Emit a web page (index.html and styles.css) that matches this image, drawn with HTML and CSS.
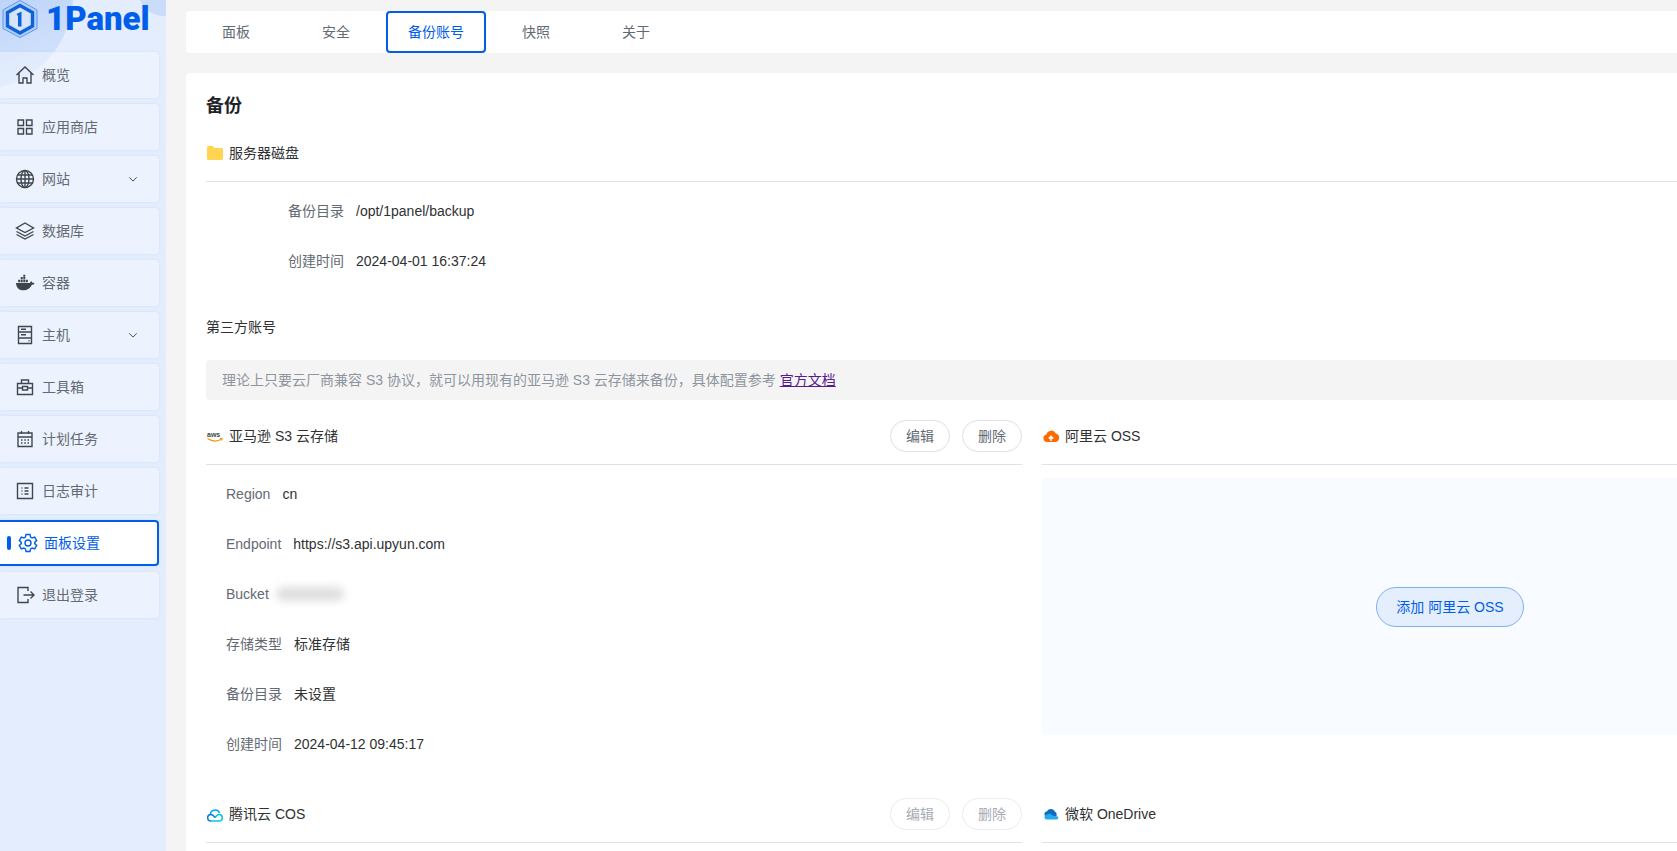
FILE: index.html
```html
<!DOCTYPE html>
<html lang="zh-CN">
<head>
    <meta charset="UTF-8">
    <title>1Panel 面板设置</title>
    <link rel="stylesheet" href="styles.css">
</head>
<body>
    <div class="layout">
        <aside class="sidebar">
            <span class="blob blob-big"></span>
            <span class="blob blob-small"></span>
            <div class="logo">
                <svg class="logo-mark" viewBox="0 0 36 38" fill="none">
                    <path d="M18 .5 35 10v18.500L18 37.500 1 28.500V10z" fill="#b4cffa" stroke="#5b96f0" stroke-width="1"/>
                    <path d="M18 5.500 30.500 12.500v13.500L18 33 5.500 26V12.500z" fill="#d6e4fc" stroke="#0f62d8" stroke-width="3.400"/>
                    <path d="M14.500 14 19.500 11.500V26.500H16V16z" fill="#0f62d8"/>
                </svg>
                <span class="logo-text">1Panel</span>
            </div>
            <nav class="menu">
                <a class="menu-item">
                    <svg class="menu-icon" viewBox="0 0 20 20"><path d="M1.500 10 10 2l8.500 8M4 8v10h4v-5h4v5h4V8"/></svg>
                    <span>概览</span>
                </a>
                <a class="menu-item">
                    <svg class="menu-icon" viewBox="0 0 20 20"><path d="M3 3h5.500v5.500H3zM11.500 3H17v5.500h-5.500zM3 11.500h5.500V17H3zM11.500 11.500H17V17h-5.500z"/></svg>
                    <span>应用商店</span>
                </a>
                <a class="menu-item">
                    <svg class="menu-icon" viewBox="0 0 20 20"><circle cx="10" cy="10" r="8.500"/><ellipse cx="10" cy="10" rx="4" ry="8.500"/><path d="M10 1.500v17M1.500 10h17M2.700 6h14.600M2.700 14h14.600"/></svg>
                    <span>网站</span>
                    <svg class="menu-arrow" viewBox="0 0 12 12"><path d="M1.500 4 6 8.500 10.500 4"/></svg>
                </a>
                <a class="menu-item">
                    <svg class="menu-icon" viewBox="0 0 20 20"><path d="M10 2 18.500 7 10 11.500 1.500 7zM1.500 10.500 10 15l8.500-4.500M1.500 13.500 10 18l8.500-4.500"/></svg>
                    <span>数据库</span>
                </a>
                <a class="menu-item">
                    <svg class="menu-icon docker" viewBox="0 0 22 18"><path d="M1 9h15.500c.3-1.500 1-2 1.500-2 .6.400 1 1 1.100 1.700 1 0 1.900.1 2.400.5-.6 1.200-1.700 1.600-3 1.600C17 14.500 13.500 17 9 17c-5 0-7.500-3-8-8z"/><path d="M3.500 5.500h2.200v2.800H3.500zM6.300 5.500h2.200v2.800H6.300zM9.100 5.500h2.200v2.800H9.100zM11.900 5.500h2.200v2.800h-2.200zM6.300 2.500h2.200v2.500H6.300zM9.100 2.500h2.200v2.500H9.100zM9.100 0h2.200v2H9.100z"/></svg>
                    <span>容器</span>
                </a>
                <a class="menu-item">
                    <svg class="menu-icon" viewBox="0 0 20 20"><path d="M3.500 1.500h13v17h-13zM3.500 7h13M3.500 13h13M6 4.200h5M6 9.800h5M13.500 15.800h1"/></svg>
                    <span>主机</span>
                    <svg class="menu-arrow" viewBox="0 0 12 12"><path d="M1.500 4 6 8.500 10.500 4"/></svg>
                </a>
                <a class="menu-item">
                    <svg class="menu-icon" viewBox="0 0 20 20"><path d="M2.500 6.500h15v11h-15zM6.500 6.500V3h7v3.500M2.500 11h5M12.500 11h5M7.500 9.500h5v3.500h-5z"/></svg>
                    <span>工具箱</span>
                </a>
                <a class="menu-item">
                    <svg class="menu-icon" viewBox="0 0 20 20"><path d="M3 4h14v13.500H3zM3 8h14M6.500 2v3M13.500 2v3M6 11h1.500M9.300 11h1.500M12.500 11H14M6 14h1.500M9.300 14h1.500M12.500 14H14"/></svg>
                    <span>计划任务</span>
                </a>
                <a class="menu-item">
                    <svg class="menu-icon" viewBox="0 0 20 20"><path d="M2.500 2.500h15v15h-15zM6.500 7h1M9.500 7h4M6.500 10h1M9.500 10h4M6.500 13h1M9.500 13h4"/></svg>
                    <span>日志审计</span>
                </a>
                <a class="menu-item active">
                    <span class="active-bar"></span>
                    <svg class="menu-icon" viewBox="0 0 20 20"><path d="M8 1.500h4l.6 2.600 1.500.9 2.600-.8 2 3.400-2 1.800v1.200l2 1.800-2 3.400-2.600-.8-1.500.9-.6 2.600H8l-.6-2.600-1.500-.9-2.600.8-2-3.400 2-1.800V9.400l-2-1.800 2-3.400 2.600.8 1.500-.9z"/><circle cx="10" cy="10" r="3"/></svg>
                    <span>面板设置</span>
                </a>
                <a class="menu-item">
                    <svg class="menu-icon" viewBox="0 0 20 20"><path d="M13 6V2.500H3v15h10V14M8.500 10H19M15.500 6.500 19 10l-3.500 3.500"/></svg>
                    <span>退出登录</span>
                </a>
            </nav>
        </aside>

        <main class="main">
            <div class="tabs">
                <a class="tab">面板</a>
                <a class="tab">安全</a>
                <a class="tab active">备份账号</a>
                <a class="tab">快照</a>
                <a class="tab">关于</a>
            </div>

            <section class="card">
                <h2 class="card-title">备份</h2>
                <div class="section-head">
                    <div class="head-title">
                        <svg class="brand-icon" viewBox="0 0 16 14"><path d="M1.500 0h4.300l1.500 2h7.200A1.500 1.500 0 0 1 16 3.500v9a1.500 1.500 0 0 1-1.500 1.500h-13A1.500 1.500 0 0 1 0 12.500v-11A1.500 1.500 0 0 1 1.500 0z" fill="#ffd552"/></svg>
                        <span>服务器磁盘</span>
                    </div>
                </div>
                <div class="info-list">
                    <div class="info-row wide"><label>备份目录</label><span>/opt/1panel/backup</span></div>
                    <div class="info-row wide"><label>创建时间</label><span>2024-04-01 16:37:24</span></div>
                </div>

                <div class="third-title">第三方账号</div>
                <div class="alert">理论上只要云厂商兼容 S3 协议，就可以用现有的亚马逊 S3 云存储来备份，具体配置参考 <a class="doc-link">官方文档</a></div>

                <div class="accounts">
                    <div class="account">
                        <div class="section-head">
                            <div class="head-title">
                                <svg class="brand-icon" viewBox="0 0 16 14" fill="none">
                                    <text x="0" y="7.500" class="aws-text">aws</text>
                                    <path d="M.5 9.500c4.500 3 10 3 14 .5M13 9.300l2 .4-.8 1.800" stroke="#f79400" stroke-width="1.200"/>
                                </svg>
                                <span>亚马逊 S3 云存储</span>
                            </div>
                            <div class="head-actions">
                                <button class="pill">编辑</button>
                                <button class="pill">删除</button>
                            </div>
                        </div>
                        <div class="info-list">
                            <div class="info-row"><label>Region</label><span>cn</span></div>
                            <div class="info-row"><label>Endpoint</label><span>https://s3.api.upyun.com</span></div>
                            <div class="info-row"><label>Bucket</label><span class="blurred"></span></div>
                            <div class="info-row"><label>存储类型</label><span>标准存储</span></div>
                            <div class="info-row"><label>备份目录</label><span>未设置</span></div>
                            <div class="info-row"><label>创建时间</label><span>2024-04-12 09:45:17</span></div>
                        </div>
                    </div>

                    <div class="account">
                        <div class="section-head">
                            <div class="head-title">
                                <svg class="brand-icon" viewBox="0 0 16 14">
                                    <path d="M4 13a3.800 3.800 0 0 1-.6-7.500A5 5 0 0 1 12.800 4.500 4.300 4.300 0 0 1 12 13z" fill="#ff6a00"/>
                                    <path d="M8 12V7.500M5.800 9.500 8 7.300l2.200 2.200" stroke="#fff" stroke-width="1.500" fill="none"/>
                                </svg>
                                <span>阿里云 OSS</span>
                            </div>
                        </div>
                        <div class="empty-box">
                            <button class="add-btn">添加 阿里云 OSS</button>
                        </div>
                    </div>

                    <div class="account">
                        <div class="section-head">
                            <div class="head-title">
                                <svg class="brand-icon tall" viewBox="0 0 16 16" fill="none">
                                    <path d="M3.300 9A4.800 4.800 0 0 1 12.500 7" stroke="#00a3ff" stroke-width="1.500"/>
                                    <path d="M4 15h8a3.300 3.300 0 0 0 0-6.600c-2 0-3 1.600-4 3.300" stroke="#00c8dc" stroke-width="1.500"/>
                                    <path d="M8 11.700C7 10 6 8.400 4 8.400A3.300 3.300 0 0 0 4 15" stroke="#0078e6" stroke-width="1.500"/>
                                </svg>
                                <span>腾讯云 COS</span>
                            </div>
                            <div class="head-actions">
                                <button class="pill disabled">编辑</button>
                                <button class="pill disabled">删除</button>
                            </div>
                        </div>
                    </div>

                    <div class="account">
                        <div class="section-head">
                            <div class="head-title">
                                <svg class="brand-icon" viewBox="0 0 16 14">
                                    <path d="M2.500 9.500A3 3 0 0 1 4 4.200 4.500 4.500 0 0 1 12 4.800 3 3 0 0 1 13 9.500z" fill="#0f6cbd"/>
                                    <path d="M3 12.500a2.500 2.500 0 0 1-.5-4.300L6.500 6.500 11 9l4 .6a2.200 2.200 0 0 1-1.500 2.900z" fill="#29a8ea"/>
                                </svg>
                                <span>微软 OneDrive</span>
                            </div>
                        </div>
                    </div>
                </div>
            </section>
        </main>
    </div>
</body>
</html>
```

FILE: styles.css
```css
* {
    margin: 0;
    padding: 0;
    box-sizing: border-box;
}

html,
body {
    height: 100%;
    overflow: hidden;
}

body {
    font-family: "Liberation Sans", "Noto Sans CJK SC", sans-serif;
    font-size: 14px;
    line-height: 20px;
    color: #303133;
    background: #f4f4f5;
}

.layout {
    display: flex;
    height: 851px;
}

/* sidebar */
.sidebar {
    position: relative;
    flex: none;
    width: 166px;
    overflow: hidden;
    background: #e3edfd;
}

.blob {
    position: absolute;
    border-radius: 50%;
}

.blob-big {
    left: -117px;
    top: -100px;
    width: 190px;
    height: 190px;
    background: linear-gradient(160deg, #b3cef8 40%, #dce8fc 100%);
}

.blob-small {
    right: -24px;
    top: -36px;
    width: 52px;
    height: 52px;
    background: #c9dcfa;
}

.logo {
    position: relative;
    display: flex;
    align-items: center;
    gap: 8px;
    height: 38px;
    padding-left: 2px;
    margin-bottom: 14px;
}

.logo-mark {
    flex: none;
    width: 36px;
    height: 38px;
}

.logo-text {
    font-family: Roboto, sans-serif;
    font-size: 33px;
    font-weight: 900;
    line-height: 38px;
    color: #005eeb;
}

.menu {
    position: relative;
    display: flex;
    flex-direction: column;
    gap: 6px;
    padding-right: 7px;
}

.menu-item {
    display: flex;
    align-items: center;
    height: 46px;
    padding-left: 15px;
    background: rgba(255, 255, 255, 0.35);
    border-radius: 0 4px 4px 0;
    box-shadow: 0 0 3px rgba(120, 160, 235, 0.18);
    color: #646a73;
}

.menu-icon {
    flex: none;
    width: 20px;
    height: 20px;
    margin-right: 7px;
    fill: none;
    stroke: #41464e;
    stroke-width: 1.400;
}

.menu-icon.docker {
    fill: #3f444c;
    stroke: none;
}

.menu-arrow {
    width: 10px;
    height: 10px;
    margin-left: auto;
    margin-right: 21px;
    fill: none;
    stroke: #4a4f57;
    stroke-width: 1.200;
}

.menu-item.active {
    padding-left: 7px;
    background: #fff;
    border: 2px solid #005eeb;
    border-left: none;
    color: #005eeb;
}

.active-bar {
    flex: none;
    width: 4px;
    height: 14px;
    margin-right: 7px;
    border-radius: 2px;
    background: #005eeb;
}

.menu-item.active .menu-icon {
    stroke: #005eeb;
    margin-right: 6px;
}

/* main */
.main {
    flex: none;
    width: 1732px;
    padding: 11px 20px;
}

.tabs {
    display: flex;
    height: 42px;
    margin-bottom: 20px;
    background: #fff;
    border-radius: 4px;
    box-shadow: 0 0 2px rgba(0, 0, 0, 0.04);
}

.tab {
    width: 100px;
    line-height: 42px;
    text-align: center;
    color: #646a73;
}

.tab.active {
    line-height: 38px;
    color: #005eeb;
    border: 2px solid #005eeb;
    border-radius: 4px;
}

.card {
    height: 900px;
    padding: 20px;
    background: #fff;
    border-radius: 4px;
}

.card-title {
    height: 26px;
    margin-bottom: 6px;
    font-size: 18px;
    line-height: 26px;
    font-weight: 700;
    color: #1f2329;
}

.section-head {
    display: flex;
    align-items: center;
    justify-content: space-between;
    height: 57px;
    border-bottom: 1px solid #e0e0e6;
}

.head-title {
    display: flex;
    align-items: center;
    gap: 6px;
    padding-left: 1px;
    color: #303133;
}

.brand-icon {
    width: 16px;
    height: 14px;
}

.brand-icon.tall {
    height: 16px;
}

.aws-text {
    font-family: "Liberation Sans", sans-serif;
    font-size: 7px;
    font-weight: 700;
    fill: #444;
}

.head-actions {
    display: flex;
    gap: 12px;
}

.pill {
    width: 60px;
    height: 32px;
    background: #fff;
    border: 1px solid #dcdfe6;
    border-radius: 16px;
    font: inherit;
    color: #646a73;
}

.pill.disabled {
    border-color: #ebedf0;
    color: #a8abb2;
}

.info-list {
    padding-top: 4px;
}

.info-row {
    display: flex;
    align-items: center;
    height: 50px;
    padding-left: 20px;
    color: #303133;
}

.info-row label {
    padding-right: 12px;
    color: #646a73;
}

.info-row.wide {
    padding-left: 0;
}

.info-row.wide label {
    width: 150px;
    padding-right: 12px;
    text-align: right;
}

.blurred {
    width: 68px;
    height: 14px;
    margin-left: -5px;
    border-radius: 7px;
    background: #dedee0;
    filter: blur(4px);
}

.third-title {
    margin-top: 29px;
    line-height: 24px;
}

.alert {
    height: 40px;
    margin-top: 21px;
    padding-left: 16px;
    line-height: 40px;
    background: #f4f4f5;
    border-radius: 4px;
    color: #8f959e;
}

.doc-link {
    color: #551a8b;
    text-decoration: underline;
}

.accounts {
    display: grid;
    grid-template-columns: 816px 816px;
    column-gap: 20px;
    row-gap: 17px;
    margin-top: 8px;
}

.empty-box {
    display: flex;
    align-items: center;
    justify-content: center;
    height: 257px;
    margin-top: 13px;
    background: #f8fbff;
    border-radius: 4px;
}

.add-btn {
    width: 148px;
    height: 40px;
    background: #e5eefd;
    border: 1px solid #80b0f5;
    border-radius: 20px;
    font: inherit;
    color: #005eeb;
}
```
